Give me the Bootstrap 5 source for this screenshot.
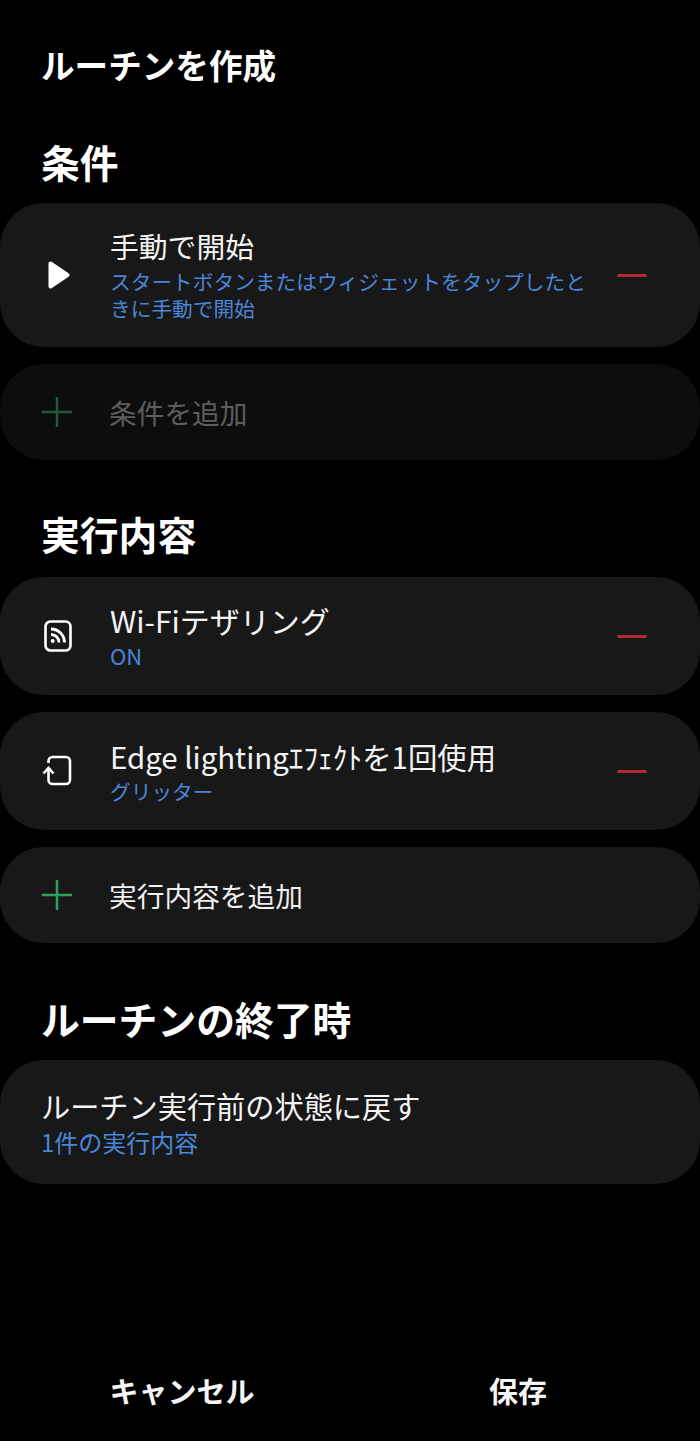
<!DOCTYPE html>
<html lang="ja">
<head>
<meta charset="utf-8">
<link href="https://cdn.jsdelivr.net/npm/bootstrap@5.3.0/dist/css/bootstrap.min.css" rel="stylesheet">
<style>
html,body{background:#000;height:100%;}
body{font-family:"Noto Sans CJK JP","Noto Sans",sans-serif;color:#fff;width:700px;height:1441px;overflow:hidden;}
.screen{height:1441px;}
.page-title{font-size:33.6px;font-weight:700;line-height:46px;margin:0;padding:42px 0 0 41px;}
.sec-title{font-size:38.800px;font-weight:700;line-height:52px;margin:0;padding-left:41px;}
.sec-1{margin-top:47px;margin-bottom:16px;}
.sec-2{margin-top:47px;margin-bottom:18px;}
.sec-3{margin-top:49px;margin-bottom:16px;}
.tile{background:#181818;border-radius:44px;margin-bottom:17px;padding-right:53px;}
.tile-dim{background:#0d0d0d;}
.h-start{height:144px;}
.h-add{height:96px;}
.h-act{height:118px;}
.h-end{height:124px;padding-bottom:2px;}
.txt-up{padding-bottom:2px;}
.ico{width:110px;flex:0 0 110px;padding-left:41px;}
.ico svg{display:block;}
.ml-play{margin-left:6px;}
.ml-wifi{margin-left:3px;}
.ml-edge{margin-left:1px;}
.add-gap{margin-left:-1px;}
.tname{font-size:28.8px;line-height:38px;color:#f4f4f4;margin-bottom:3px;}
.tname-wifi{font-size:30px;}
.tname-edge{font-size:29.400px;}
.tname-end{font-size:29.200px;}
.tsub{font-size:20.700px;line-height:27px;color:#4a86d8;}
.tsub-on{font-size:22px;}
.tsub-end{font-size:24px;line-height:30px;}
.taddtxt{font-size:27.700px;line-height:36px;color:#f0f0f0;}
.dimtxt{color:#5e5e5e;}
.minus{width:30px;height:3px;border-radius:2px;background:#b22a30;flex:0 0 30px;}
.indent{padding-left:41px;}
.foot{position:absolute;left:0;right:0;top:1363px;}
.foot-btn{font-size:29px;line-height:54px;font-weight:700;color:#f4f4f4;text-align:center;}
.foot-l{width:364px;}
.foot-r{width:308px;}
</style>
</head>
<body>
<div class="screen position-relative">
<h1 class="page-title">ルーチンを作成</h1>
<h2 class="sec-title sec-1">条件</h2>
<div class="tile h-start d-flex align-items-center">
  <div class="ico"><svg class="ml-play" width="24" height="30" viewBox="0 0 24 30"><path d="M3.500 3.500 L20.500 15 L3.500 26.500 Z" fill="#fff" stroke="#fff" stroke-width="4" stroke-linejoin="round"/></svg></div>
  <div class="flex-grow-1 txt-up"><div class="tname">手動で開始</div><div class="tsub">スタートボタンまたはウィジェットをタップしたときに手動で開始</div></div>
  <div class="minus ms-4"></div>
</div>
<div class="tile tile-dim h-add d-flex align-items-center">
  <div class="ico"><svg width="32" height="32" viewBox="0 0 32 32"><path d="M16 1V31M1 16H31" stroke="#1f5a3a" stroke-width="2.500"/></svg></div>
  <div class="taddtxt dimtxt add-gap">条件を追加</div>
</div>
<h2 class="sec-title sec-2">実行内容</h2>
<div class="tile h-act d-flex align-items-center">
  <div class="ico"><svg class="ml-wifi" width="28" height="32" viewBox="0 0 28 32"><rect x="1.500" y="1.500" width="25" height="29" rx="5" fill="none" stroke="#fff" stroke-width="2.600"/><circle cx="8.700" cy="21" r="2" fill="#fff"/><path d="M7 14.500a8 8 0 0 1 8 8M7 9a13.500 13.500 0 0 1 13.500 13.500" fill="none" stroke="#fff" stroke-width="2.800"/></svg></div>
  <div class="flex-grow-1 txt-up"><div class="tname tname-wifi">Wi-Fiテザリング</div><div class="tsub tsub-on">ON</div></div>
  <div class="minus"></div>
</div>
<div class="tile h-act d-flex align-items-center">
  <div class="ico"><svg class="ml-edge" width="30" height="32" viewBox="0 0 30 32"><path d="M6.500 8V6a4 4 0 0 1 4-4H24a4 4 0 0 1 4 4V25a4 4 0 0 1-4 4H10.500a4 4 0 0 1-4-4V13" fill="none" stroke="#fff" stroke-width="2.600"/><path d="M1.500 18.500L6.500 13l5 5.500" fill="none" stroke="#fff" stroke-width="2.600"/></svg></div>
  <div class="flex-grow-1"><div class="tname tname-edge">Edge lightingｴﾌｪｸﾄを1回使用</div><div class="tsub">グリッター</div></div>
  <div class="minus"></div>
</div>
<div class="tile h-add d-flex align-items-center">
  <div class="ico"><svg width="32" height="32" viewBox="0 0 32 32"><path d="M16 1V31M1 16H31" stroke="#2f9e62" stroke-width="2.500"/></svg></div>
  <div class="taddtxt add-gap">実行内容を追加</div>
</div>
<h2 class="sec-title sec-3">ルーチンの終了時</h2>
<div class="tile h-end indent d-flex flex-column justify-content-center">
  <div class="tname tname-end">ルーチン実行前の状態に戻す</div><div class="tsub tsub-end">1件の実行内容</div>
</div>
<div class="foot d-flex">
  <div class="foot-btn foot-l">キャンセル</div><div class="foot-btn foot-r">保存</div>
</div>
</div>
<script src="https://cdn.jsdelivr.net/npm/bootstrap@5.3.0/dist/js/bootstrap.bundle.min.js"></script>
</body>
</html>
